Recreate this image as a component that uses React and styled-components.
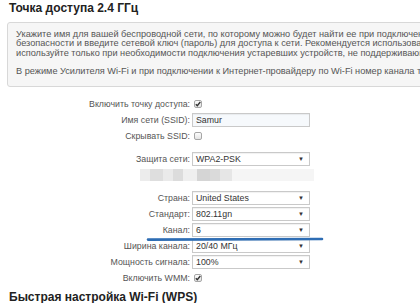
import React from "react";
import styled, { createGlobalStyle } from "styled-components";

const GlobalStyle = createGlobalStyle`
    html, body {
        margin: 0;
        padding: 0;
        background: #fff;
    }
    body {
        font-family: "Liberation Sans", Arial, sans-serif;
        color: #333;
        width: 420px;
        height: 303px;
        overflow: hidden;
    }
`;

const Page = styled.div`
    position: relative;
    width: 420px;
    height: 303px;
    overflow: hidden;
`;

const Title = styled.h2`
    margin: ${(p) => p.$top || 0}px 0 0;
    padding: ${(p) => (p.$first ? "1px" : "0")} 0 0 9px;
    font-size: 12px;
    line-height: 14px;
    font-weight: bold;
    color: #222;
    white-space: nowrap;
`;

const Notice = styled.div`
    margin: 7px 0 0 7px;
    width: 470px;
    box-sizing: border-box;
    padding: 6.75px 0 9px 8px;
    border: 1px solid #d8d8d8;
    border-radius: 3px;
    background: #f6f6f6;
    font-size: 9.2px;
    line-height: 9.5px;
    color: #555;
    white-space: nowrap;
`;

const Para = styled.p`
    margin: ${(p) => (p.$gap ? "9px" : "0")} 0 0;
`;

const Form = styled.div`
    margin-top: 8.8px;
`;

const Group = styled.div`
    margin-top: ${(p) => p.$gap || 0}px;
`;

const Row = styled.div`
    display: grid;
    grid-template-columns: 190px 118px;
    column-gap: 2px;
    height: 16px;
    align-items: center;
`;

const Label = styled.span`
    text-align: right;
    font-size: 8.8px;
    color: #555;
    white-space: nowrap;
`;

const Field = styled.div`
    display: flex;
    align-items: center;
    height: 14px;
    box-sizing: border-box;
    padding: 0 3px;
    border: 1px solid #c9c9c9;
    background: ${(p) => (p.$input ? "#f6f9fc" : "#fff")};
    box-shadow: inset 0 1px 1px rgba(0, 0, 0, 0.06);
    font-size: 8.8px;
    color: #333;
`;

const Value = styled.span`
    flex: 1;
    white-space: nowrap;
`;

const Arrow = styled.span`
    font-size: 6px;
    color: #333;
    margin-right: 2px;
`;

const Box = styled.span`
    display: flex;
    align-items: center;
    justify-content: center;
    width: 8px;
    height: 8px;
    margin-left: 2px;
    box-sizing: border-box;
    border: 1px solid #a6a6a6;
    border-radius: 2px;
    background: linear-gradient(#fdfdfd, #e4e4e4);
`;

const Blur = styled.div`
    display: flex;
    margin-left: 140px;
    width: 174px;
    height: 12px;
`;

const Cell = styled.span`
    width: ${(p) => p.$w}px;
    height: 100%;
    background: ${(p) => p.$c};
`;

const Marker = styled.svg`
    position: absolute;
    left: 146px;
    top: 237px;
    width: 178px;
    height: 4px;
`;

const Check = ({ on }) => (
    <Box>
        {on && (
            <svg width="6" height="6" viewBox="0 0 6 6">
                <path d="M0.8 3.2 L2.3 4.7 L5.3 1" fill="none" stroke="#333" strokeWidth="1.4" />
            </svg>
        )}
    </Box>
);

const Select = ({ value }) => (
    <Field>
        <Value>{value}</Value>
        <Arrow>▼</Arrow>
    </Field>
);

const blurCells = [
    [10, "#ececec"], [13, "#dedede"], [10, "#eaeaea"], [10, "#dcdcdc"],
    [14, "#efefef"], [13, "#d5d5d5"], [10, "#dadada"], [12, "#e6e6e6"],
    [82, "#f5f5f5"],
];

export default function App() {
    return (
        <Page>
            <GlobalStyle />
            <Title $first>Точка доступа 2.4 ГГц</Title>
            <Notice>
                <Para>
                    Укажите имя для вашей беспроводной сети, по которому можно будет найти ее при подключении. Выберите режим защиты
                    <br />
                    безопасности и введите сетевой ключ (пароль) для доступа к сети. Рекомендуется использовать метод защиты WPA2-PSK,
                    <br />
                    используйте только при необходимости подключения устаревших устройств, не поддерживающих WPA2.
                </Para>
                <Para $gap>
                    В режиме Усилителя Wi-Fi и при подключении к Интернет-провайдеру по Wi-Fi номер канала точки доступа
                </Para>
            </Notice>
            <Form>
                <Group>
                    <Row>
                        <Label>Включить точку доступа:</Label>
                        <Check on />
                    </Row>
                    <Row>
                        <Label>Имя сети (SSID):</Label>
                        <Field $input>
                            <Value>Samur</Value>
                        </Field>
                    </Row>
                    <Row>
                        <Label>Скрывать SSID:</Label>
                        <Check />
                    </Row>
                </Group>
                <Group $gap={7}>
                    <Row>
                        <Label>Защита сети:</Label>
                        <Select value="WPA2-PSK" />
                    </Row>
                    <Row>
                        <Blur>
                            {blurCells.map(([w, c], i) => (
                                <Cell key={i} $w={w} $c={c} />
                            ))}
                        </Blur>
                    </Row>
                </Group>
                <Group $gap={7}>
                    <Row>
                        <Label>Страна:</Label>
                        <Select value="United States" />
                    </Row>
                    <Row>
                        <Label>Стандарт:</Label>
                        <Select value="802.11gn" />
                    </Row>
                    <Row>
                        <Label>Канал:</Label>
                        <Select value="6" />
                    </Row>
                    <Row>
                        <Label>Ширина канала:</Label>
                        <Select value="20/40 МГц" />
                    </Row>
                    <Row>
                        <Label>Мощность сигнала:</Label>
                        <Select value="100%" />
                    </Row>
                    <Row>
                        <Label>Включить WMM:</Label>
                        <Check on />
                    </Row>
                </Group>
            </Form>
            <Title $top={4.5}>Быстрая настройка Wi-Fi (WPS)</Title>
            <Marker viewBox="0 0 178 4">
                <path d="M2 2.6 L176 2" stroke="#2e6db4" strokeWidth="2.6" strokeLinecap="round" fill="none" />
            </Marker>
        </Page>
    );
}
